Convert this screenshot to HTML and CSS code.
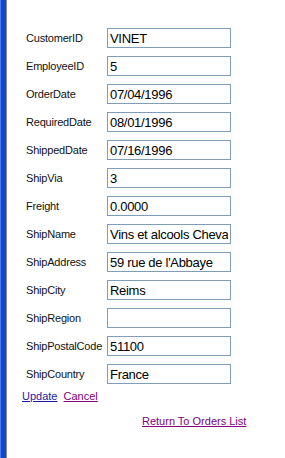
FILE: index.html
```html
<!DOCTYPE html>
<html lang="en">
<head>
  <meta charset="UTF-8">
  <title>Edit Order</title>
  <link rel="stylesheet" href="styles.css">
</head>
<body>

<div class="frame">
  <table class="order-form">
    <tr><td class="label">CustomerID</td><td><input class="field" type="text" value="VINET"></td></tr>
    <tr><td class="label">EmployeeID</td><td><input class="field" type="text" value="5"></td></tr>
    <tr><td class="label">OrderDate</td><td><input class="field" type="text" value="07/04/1996"></td></tr>
    <tr><td class="label">RequiredDate</td><td><input class="field" type="text" value="08/01/1996"></td></tr>
    <tr><td class="label">ShippedDate</td><td><input class="field" type="text" value="07/16/1996"></td></tr>
    <tr><td class="label">ShipVia</td><td><input class="field" type="text" value="3"></td></tr>
    <tr><td class="label">Freight</td><td><input class="field" type="text" value="0.0000"></td></tr>
    <tr><td class="label">ShipName</td><td><input class="field" type="text" value="Vins et alcools Chevalier"></td></tr>
    <tr><td class="label">ShipAddress</td><td><input class="field" type="text" value="59 rue de l'Abbaye"></td></tr>
    <tr><td class="label">ShipCity</td><td><input class="field" type="text" value="Reims"></td></tr>
    <tr><td class="label">ShipRegion</td><td><input class="field" type="text" value=""></td></tr>
    <tr><td class="label">ShipPostalCode</td><td><input class="field" type="text" value="51100"></td></tr>
    <tr><td class="label">ShipCountry</td><td><input class="field" type="text" value="France"></td></tr>
  </table>

  <div class="actions">
    <a href="#" class="link">Update</a>
    <a href="#" class="link visited">Cancel</a>
  </div>

  <div class="back">
    <a href="#" class="link visited">Return To Orders List</a>
  </div>
</div>

</body>
</html>
```

FILE: styles.css
```css
html, body {
  margin: 0;
  padding: 0;
  background-color: #ffffff;
  height: 100%;
}

body {
  font-family: "Liberation Sans", Arial, sans-serif;
  font-size: 11px;
  color: #000;
}

.frame {
  min-height: 458px;
  box-sizing: border-box;
  border-left: 6px solid #1446d6;
  box-shadow: inset 1px 0 0 #8a8a8a;
  padding: 24px 0 0 16px;
  position: relative;
}

.frame::before {
  content: "";
  position: absolute;
  left: -6px;
  top: 0;
  bottom: 0;
  width: 1px;
  background-color: #4a7ce8;
}

.order-form {
  border-collapse: collapse;
}

.order-form td {
  padding: 0;
  height: 28px;
  vertical-align: middle;
}

.label {
  padding-left: 4px !important;
  width: 81px;
  color: #111;
  letter-spacing: -0.2px;
}

.field {
  width: 124px;
  height: 20px;
  box-sizing: border-box;
  border: 1px solid #7f9db9;
  padding: 0 2px;
  margin: 0;
  font-family: "Liberation Sans", Arial, sans-serif;
  font-size: 13px;
  letter-spacing: -0.3px;
  color: #000;
  background: #fff;
}

.actions {
  margin-top: 2px;
  font-size: 11px;
}

.actions .link {
  margin-right: 3px;
}

.link {
  color: #1a1aa6;
  text-decoration: underline;
}

.link.visited {
  color: #800080;
}

.back {
  margin-top: 13px;
  padding-left: 120px;
}
```
